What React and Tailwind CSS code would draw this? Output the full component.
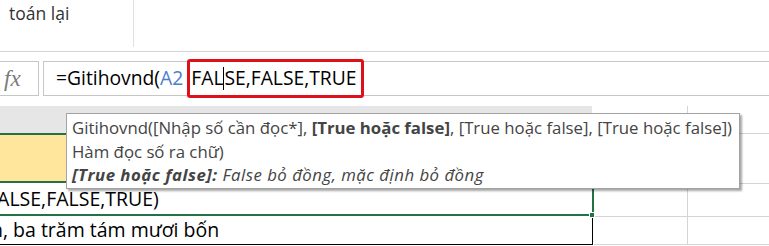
import React from 'react';

const font = "font-['Open_Sans','Noto_Sans',sans-serif]";

export default function App() {
    return (
        <div className={`relative w-[769px] h-[246px] overflow-hidden bg-white text-black ${font}`}>
            {/* Ribbon bottom */}
            <div className="flex h-[52px] border-b border-[#d4d4d4]">
                <div className="w-[134px] h-[47px] border-r border-[#e1e1e1] pl-[9px] text-[17.5px] leading-[26px] text-[#333]">
                    toán lại
                </div>
            </div>

            {/* Formula bar */}
            <div className="flex items-center h-[35px] mt-[9px]">
                <div className="w-[39px] h-[35px] border border-l-0 border-[#c6c6c6] flex items-center pl-[4px]">
                    <span className="font-['Liberation_Serif',serif] italic text-[23px] text-[#7a7a7a] leading-none">fx</span>
                </div>
                <div className="flex-1 ml-[4px] h-[35px] border border-r-0 border-[#c6c6c6] flex items-center pl-[12px] text-[19.3px] whitespace-nowrap">
                    <span>=Gitihovnd(</span>
                    <span className="text-[#4a7dd1]">A2</span>
                    <span className="inline-flex items-center h-[39px] ml-[4px] pl-[1px] pr-[4px] border-[3px] border-[#e0101a] rounded-[3px]">
                        FAL<span className="inline-block w-px h-[23px] bg-black" />SE,FALSE,TRUE
                    </span>
                </div>
            </div>

            {/* Column headers */}
            <div className="flex h-[27px] mt-[10px]">
                <div className="w-[592px] bg-[#e6e6e6]" />
                <div className="w-[96px] border-r border-[#d4d4d4]" />
                <div className="flex-1" />
            </div>

            {/* Rows */}
            <div className="flex">
                <div className="w-[594px] overflow-hidden">
                    <div className="h-[50px] bg-[#ffe69c] border-y-2 border-[#217346]" />
                    <div className="h-[33px] border-r-2 border-b-2 border-[#217346] flex items-center whitespace-nowrap text-[19.5px]">
                        <span className="-ml-[13px]">FALSE,FALSE,TRUE)</span>
                    </div>
                    <div className="h-[29px] border-r border-b border-black mr-[1px] flex items-center whitespace-nowrap text-[19.5px]">
                        <span className="-ml-[9px]">n, ba trăm tám mươi bốn</span>
                    </div>
                </div>
                <div className="flex-1 flex flex-col">
                    <div className="h-[50px] border-t border-[#d4d4d4] flex">
                        <div className="w-[94px] border-r border-[#d4d4d4]" />
                    </div>
                    <div className="h-[33px] border-t border-[#d4d4d4] flex">
                        <div className="w-[94px] border-r border-[#d4d4d4]" />
                    </div>
                    <div className="h-[29px] border-y border-[#d4d4d4] flex">
                        <div className="w-[94px] border-r border-[#d4d4d4]" />
                    </div>
                </div>
            </div>

            {/* Fill handle */}
            <div className="absolute left-[589px] top-[212px] w-[6px] h-[6px] bg-[#217346] border border-white" />

            {/* Function tooltip */}
            <div className="absolute left-[66px] top-[113px] w-[674px] h-[76px] bg-white border border-[#a3a3a3] shadow-[2px_2px_2px_rgba(0,0,0,0.35)] pl-[5px] pt-[2px] text-[16.8px] leading-[23.5px] text-[#444] whitespace-nowrap">
                <div>
                    Gitihovnd([Nhập số cần đọc*], <span className="font-bold">[True hoặc false]</span>, [True hoặc false], [True hoặc false])
                </div>
                <div>Hàm đọc số ra chữ)</div>
                <div className="italic tracking-[0.5px]">
                    <span className="font-bold">[True hoặc false]:</span> False bỏ đồng, mặc định bỏ đồng
                </div>
            </div>
        </div>
    );
}
